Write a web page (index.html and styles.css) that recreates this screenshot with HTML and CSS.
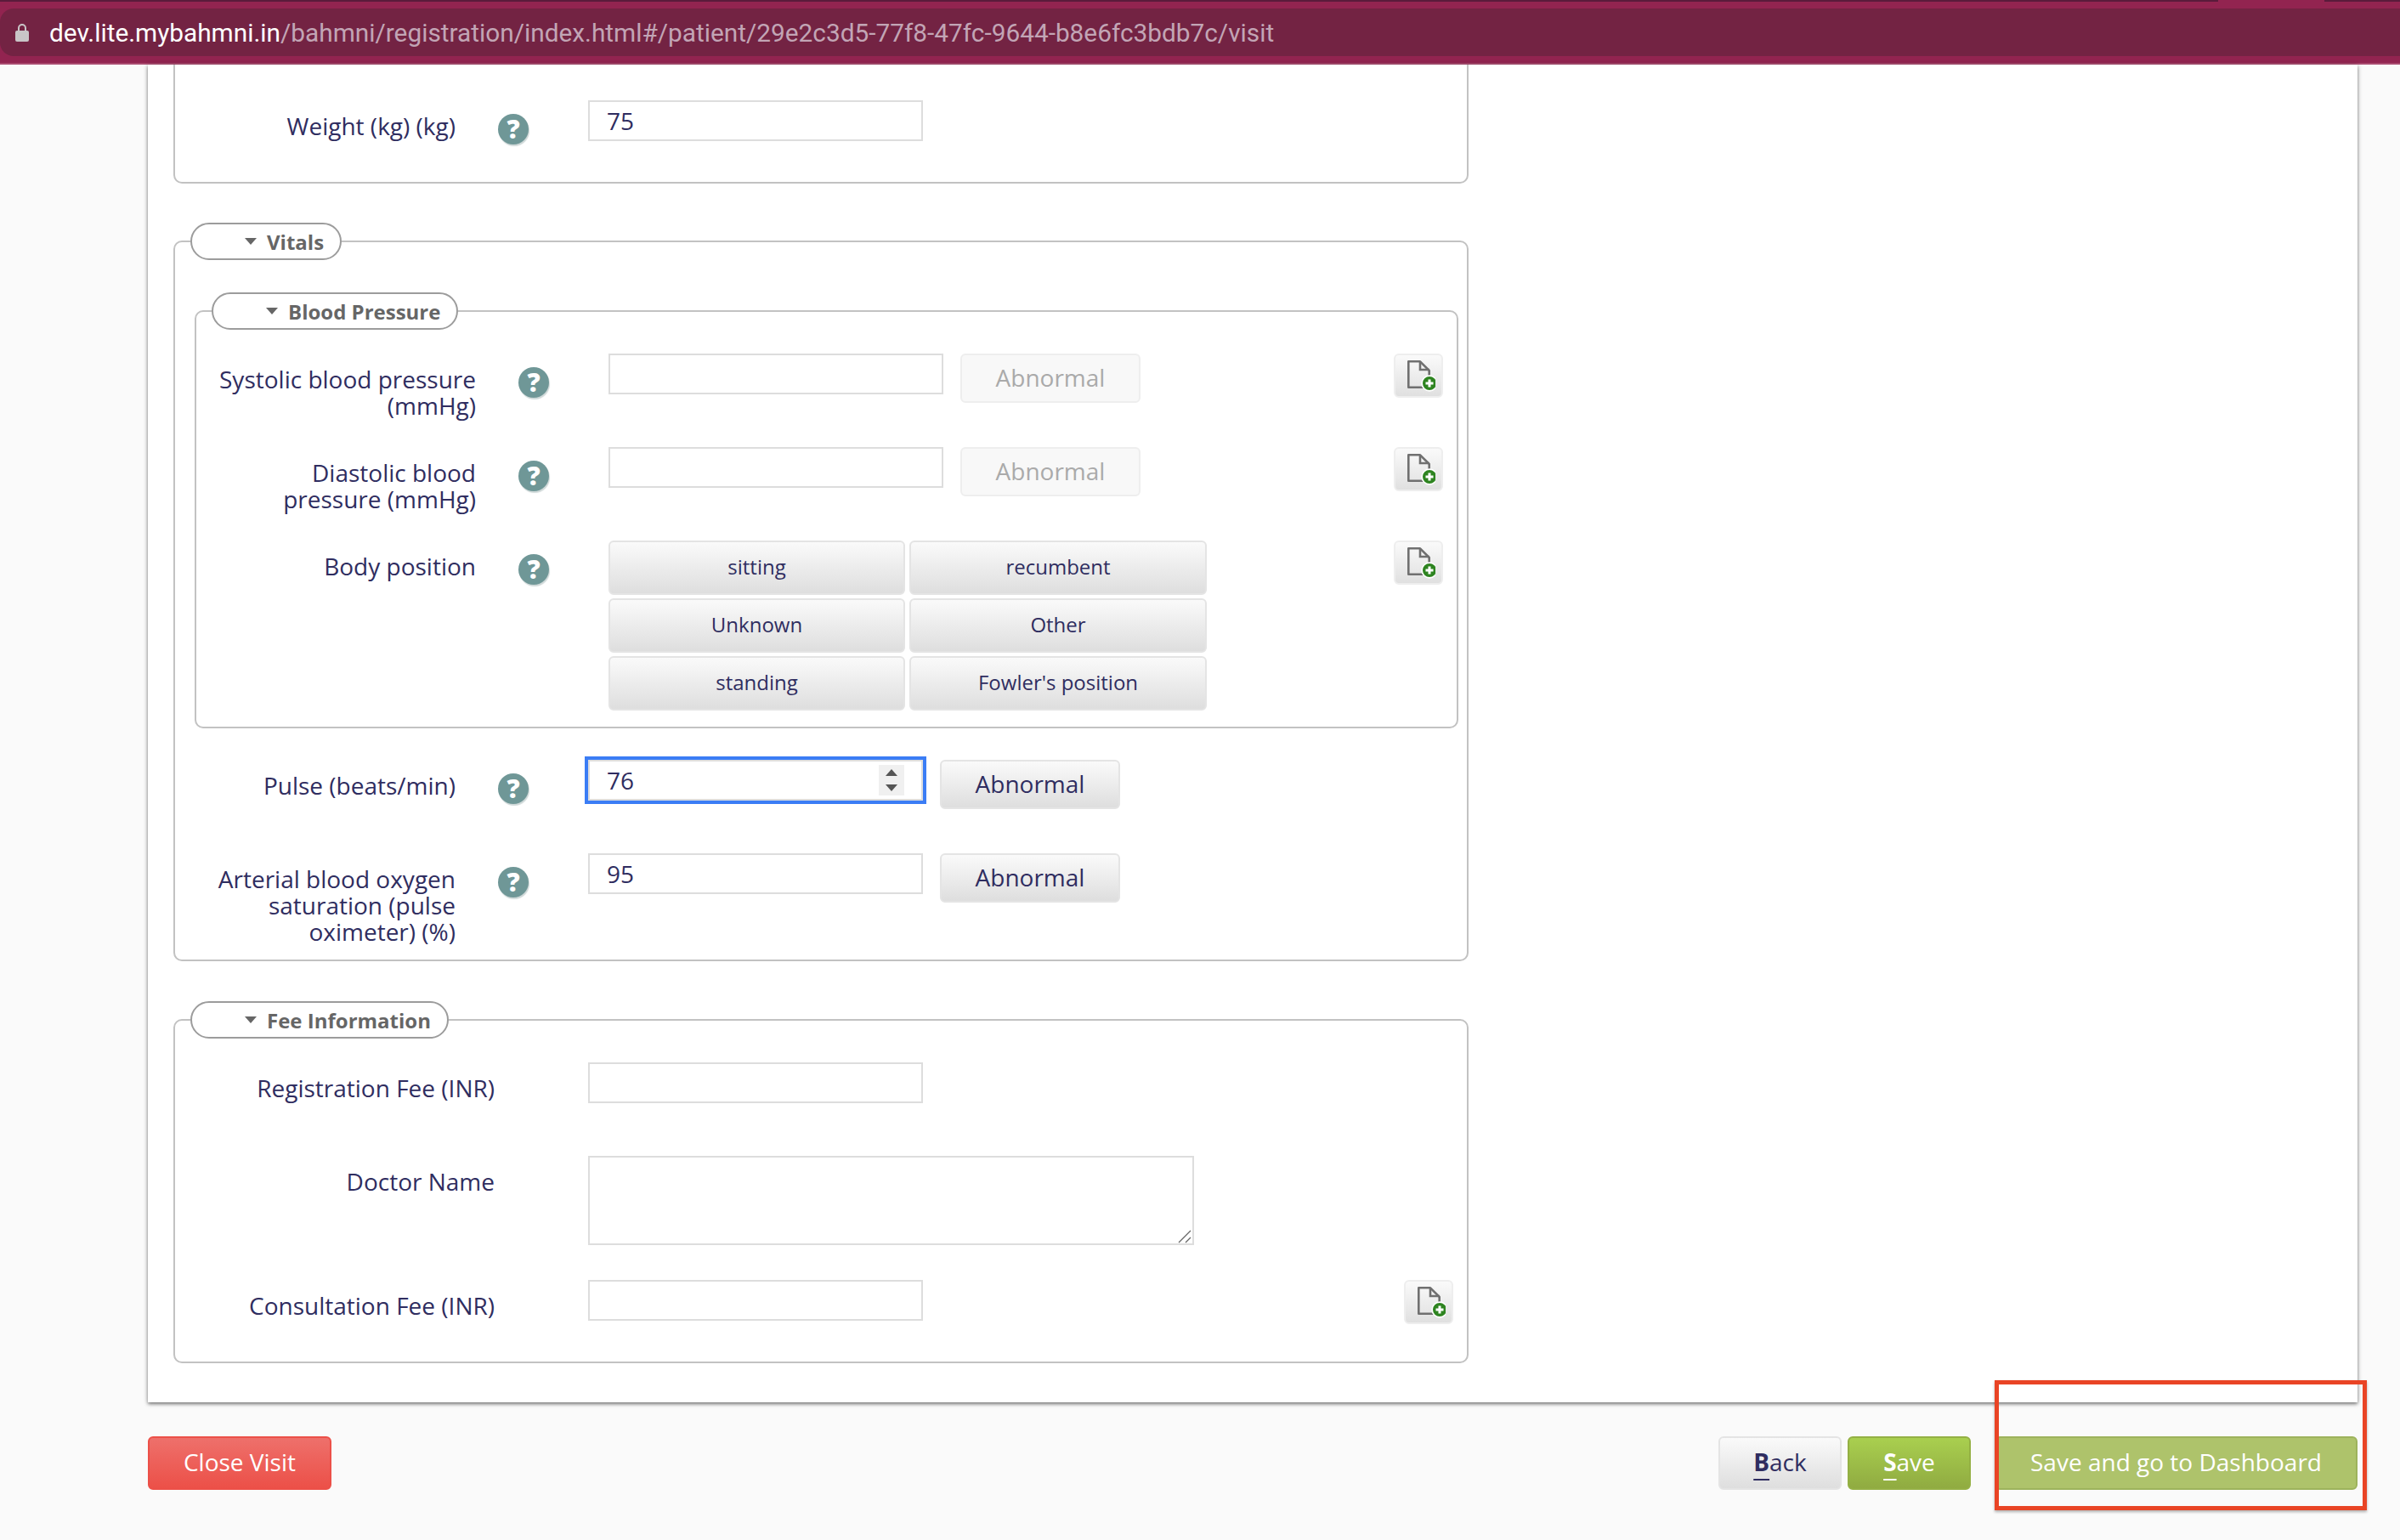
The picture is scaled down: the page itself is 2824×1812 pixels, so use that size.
FILE: index.html
```html
<!DOCTYPE html>
<html lang="en">
<head>
    <meta charset="UTF-8">
    <meta name="viewport" content="width=device-width, initial-scale=1.0">
    <title>Bahmni registration - visit</title>
    <link rel="stylesheet" href="styles.css">
</head>
<body>
    <!-- browser address bar -->
    <header class="browser-bar">
        <div class="tab-strip">
            <div class="tab-strip-left"></div>
            <div class="tab-strip-gap"></div>
            <div class="tab-strip-right"></div>
        </div>
        <div class="url-pill">
            <svg class="lock" width="16" height="22" viewBox="0 0 16 22">
                <path d="M4 10V6a4 4 0 0 1 8 0v4" fill="none" stroke="#c9c5c7" stroke-width="2"/>
                <rect x="0" y="9" width="16" height="13" rx="2" fill="#c9c5c7"/>
            </svg>
            <span class="url"><span class="url-host">dev.lite.mybahmni.in</span>/bahmni/registration/index.html#/patient/29e2c3d5-77f8-47fc-9644-b8e6fc3bdb7c/visit</span>
        </div>
    </header>

    <main class="panel">
        <!-- Weight section, scrolled off at the top -->
        <div class="group group-cut">
            <div class="row row-auto">
                <label class="row-label">Weight (kg) (kg)</label>
                <span class="help">?</span>
                <input class="field" type="text" value="75">
            </div>
        </div>

        <fieldset class="group">
            <legend class="pill"><span class="caret"></span>Vitals</legend>

            <fieldset class="group group-inner">
                <legend class="pill"><span class="caret"></span>Blood Pressure</legend>

                <div class="row">
                    <label class="row-label">Systolic blood pressure (mmHg)</label>
                    <span class="help">?</span>
                    <input class="field" type="text">
                    <button class="btn btn-abnormal" disabled>Abnormal</button>
                    <button class="btn btn-note">
                        <svg width="38" height="40" viewBox="0 0 38 40"><use href="#note-icon"/></svg>
                    </button>
                </div>

                <div class="row">
                    <label class="row-label">Diastolic blood pressure (mmHg)</label>
                    <span class="help">?</span>
                    <input class="field" type="text">
                    <button class="btn btn-abnormal" disabled>Abnormal</button>
                    <button class="btn btn-note">
                        <svg width="38" height="40" viewBox="0 0 38 40"><use href="#note-icon"/></svg>
                    </button>
                </div>

                <div class="row row-auto">
                    <label class="row-label">Body position</label>
                    <span class="help">?</span>
                    <div class="choices">
                        <button class="btn btn-choice">sitting</button>
                        <button class="btn btn-choice">recumbent</button>
                        <button class="btn btn-choice">Unknown</button>
                        <button class="btn btn-choice">Other</button>
                        <button class="btn btn-choice">standing</button>
                        <button class="btn btn-choice">Fowler's position</button>
                    </div>
                    <button class="btn btn-note">
                        <svg width="38" height="40" viewBox="0 0 38 40"><use href="#note-icon"/></svg>
                    </button>
                </div>
            </fieldset>

            <div class="row">
                <label class="row-label">Pulse (beats/min)</label>
                <span class="help">?</span>
                <span class="field-wrap">
                    <input class="field field-focus" type="text" value="76">
                    <span class="spinner"><i class="spin-up"></i><i class="spin-down"></i></span>
                </span>
                <button class="btn btn-abnormal btn-on">Abnormal</button>
            </div>

            <div class="row">
                <label class="row-label">Arterial blood oxygen saturation (pulse oximeter) (%)</label>
                <span class="help">?</span>
                <input class="field" type="text" value="95">
                <button class="btn btn-abnormal btn-on">Abnormal</button>
            </div>
        </fieldset>

        <fieldset class="group group-fee">
            <legend class="pill"><span class="caret"></span>Fee Information</legend>

            <div class="row">
                <label class="row-label row-label-wide">Registration Fee (INR)</label>
                <input class="field" type="text">
            </div>
            <div class="row row-text">
                <label class="row-label row-label-wide">Doctor Name</label>
                <span class="field-wrap">
                    <textarea class="field field-area"></textarea>
                    <svg class="grip" width="16" height="16" viewBox="0 0 16 16">
                        <path d="M1 15 15 1M9 15l6-6" stroke="#666" stroke-width="1.300" fill="none"/>
                    </svg>
                </span>
            </div>
            <div class="row row-auto">
                <label class="row-label row-label-wide">Consultation Fee (INR)</label>
                <input class="field" type="text">
                <button class="btn btn-note">
                    <svg width="38" height="40" viewBox="0 0 38 40"><use href="#note-icon"/></svg>
                </button>
            </div>
        </fieldset>
    </main>

    <footer class="actions">
        <button class="btn btn-close">Close Visit</button>
        <div class="actions-right">
            <button class="btn btn-back"><span class="key">B</span>ack</button>
            <button class="btn btn-save"><span class="key">S</span>ave</button>
            <button class="btn btn-dashboard">Save and go to Dashboard</button>
        </div>
    </footer>

    <!-- red annotation drawn over the screenshot -->
    <div class="annotation"></div>

    <svg class="icon-defs" width="0" height="0">
        <symbol id="note-icon" viewBox="0 0 38 40">
            <path d="M6.300 4.300H20L30.700 15v19.700H6.300z" fill="none" stroke="#707070" stroke-width="2.600" stroke-linejoin="round"/>
            <path d="M20 4.300V14h10.700" fill="none" stroke="#707070" stroke-width="2.600"/>
            <circle cx="31" cy="30" r="9.700" fill="#fff"/>
            <circle cx="31" cy="30" r="8" fill="#2e8420"/>
            <path d="M31 25.500v9M26.500 30h9" stroke="#fff" stroke-width="3"/>
        </symbol>
    </svg>
</body>
</html>
```

FILE: styles.css
```css
* {
    box-sizing: border-box;
}
html, body {
    height: 1812px;
    overflow: hidden;
}
body {
    margin: 0;
    background-color: #fafafa;
    font-family: "Open Sans", sans-serif;
    font-size: 28px;
    color: #2f2d60;
}

/* browser bar */
.browser-bar {
    height: 76px;
    background-color: #922450;
    border-bottom: 2px solid #a94a6f;
}
.tab-strip {
    display: flex;
    height: 2px;
    margin-bottom: 8px;
}
.tab-strip-left {
    width: 2610px;
    background-color: #5a1b3b;
}
.tab-strip-gap {
    width: 125px;
}
.tab-strip-right {
    flex: 1;
    background-color: #5a1b3b;
}
.url-pill {
    display: flex;
    align-items: center;
    height: 56px;
    padding-left: 18px;
    background-color: #732343;
    border-radius: 16px 0 0 16px;
}
.lock {
    flex: none;
    margin-right: 24px;
}
.url {
    font-family: Roboto, sans-serif;
    font-size: 29.800px;
    color: #c2a5b5;
    white-space: nowrap;
}
.url-host {
    color: #fff;
}

/* page panel */
.panel {
    width: 2600px;
    height: 1574px;
    margin-left: 174px;
    padding-left: 30px;
    background-color: #fff;
    box-shadow: 0 2px 4px rgba(0, 0, 0, 0.5), 0 0 6px rgba(0, 0, 0, 0.12);
}
.group {
    width: 1524px;
    min-width: 0;
    margin: 0 0 47px;
    padding: 0 11px 15px 23px;
    border: 2px solid #c2c2c2;
    border-radius: 10px;
}
.group-cut {
    margin-bottom: 46px;
    padding-top: 42px;
    padding-bottom: 44px;
    border-top: none;
    border-radius: 0 0 10px 10px;
}
.group-inner {
    width: 1487px;
    margin-top: 38px;
    margin-bottom: 37px;
    padding-left: 22px;
    padding-bottom: 19px;
}
.group-fee {
    margin-bottom: 0;
    padding-bottom: 44px;
}
.pill {
    display: flex;
    align-items: center;
    height: 44px;
    margin: 0 0 0 -5px;
    padding: 0 19px 0 62px;
    border: 2px solid #9c9c9c;
    border-radius: 23px;
    font-size: 24px;
    font-weight: 700;
    color: #666;
}
.group-inner > .pill {
    margin: 0 0 28px -4px;
}
.group-fee > .pill {
    margin-bottom: 28px;
}
.caret {
    width: 0;
    height: 0;
    margin-right: 12px;
    border-top: 8px solid #666;
    border-left: 7px solid transparent;
    border-right: 7px solid transparent;
}

/* form rows */
.row {
    display: flex;
    align-items: flex-start;
    height: 110px;
}
.row-auto {
    height: auto;
}
.row-text {
    height: 146px;
}
.row-label {
    flex: none;
    width: 307px;
    padding-top: 15px;
    line-height: 31px;
    text-align: right;
}
.row-label-wide {
    width: 353px;
    margin-right: 110px;
}
.help {
    flex: none;
    width: 36px;
    height: 36px;
    margin: 16px 70px 0 50px;
    background-color: #6f9797;
    border-radius: 50%;
    box-shadow: 1px 2px 1px #cfd8d8;
    font-size: 30px;
    font-weight: 800;
    line-height: 36px;
    text-align: center;
    color: #fff;
}
.field {
    display: block;
    flex: none;
    width: 394px;
    height: 48px;
    padding: 0 20px;
    background-color: #fff;
    border: 2px solid #ddd;
    border-radius: 0;
    font-family: inherit;
    font-size: 28px;
    color: #2f2d60;
}
.field-wrap {
    position: relative;
    flex: none;
}
.field-focus {
    outline: 4px solid #3b7df5;
}
.spinner {
    position: absolute;
    top: 6px;
    left: 342px;
    display: flex;
    flex-direction: column;
    align-items: center;
    justify-content: space-around;
    width: 30px;
    height: 36px;
    background-color: #f0f0f0;
}
.spin-up, .spin-down {
    width: 0;
    height: 0;
    border-left: 7px solid transparent;
    border-right: 7px solid transparent;
}
.spin-up {
    border-bottom: 8px solid #555;
}
.spin-down {
    border-top: 8px solid #555;
}
.field-area {
    width: 713px;
    height: 105px;
    resize: none;
}
.grip {
    position: absolute;
    right: 3px;
    bottom: 2px;
}

/* buttons */
.btn {
    flex: none;
    padding: 0 0 3px;
    background: linear-gradient(#fafafa, #dedede);
    border: 2px solid #e4e4e4;
    border-radius: 6px;
    font-family: inherit;
    font-size: 28px;
    color: #2f2d60;
}
.btn-abnormal {
    width: 212px;
    height: 58px;
    margin-left: 20px;
    background: #f8f8f8;
    border-color: #eee;
    color: #aaa;
}
.btn-on {
    background: linear-gradient(#fafafa, #dedede);
    border-color: #e4e4e4;
    color: #2f2d60;
}
.btn-note {
    display: flex;
    align-items: flex-start;
    justify-content: flex-start;
    width: 58px;
    height: 52px;
    margin-left: auto;
    margin-right: 5px;
    padding: 3px 0 0 9px;
    border-color: #eee;
    background: linear-gradient(#fafafa, #e0e0e0);
}
.btn-note svg {
    flex: none;
}
.choices {
    display: grid;
    grid-template-columns: 349px 350px;
    grid-auto-rows: 64px;
    gap: 4px 5px;
}
.btn-choice {
    font-size: 24px;
}

/* footer actions */
.actions {
    display: flex;
    justify-content: space-between;
    width: 2600px;
    margin: 40px 0 0 174px;
}
.actions-right {
    display: flex;
}
.actions .btn {
    height: 63px;
}
.btn-close {
    width: 216px;
    background: linear-gradient(#ee706b, #ec5048);
    border-color: #ec5048;
    color: #fff;
}
.btn-back {
    width: 145px;
    margin-right: 7px;
}
.btn-save {
    width: 145px;
    margin-right: 28px;
    background: linear-gradient(#a9cf4f, #90ab41);
    border-color: #94b044;
    color: #fff;
}
.btn-dashboard {
    width: 427px;
    background: #aec36b;
    border-color: #9db35c;
    color: #fff;
}
.key {
    font-weight: 700;
    text-decoration: underline;
    text-decoration-thickness: 2px;
    text-underline-offset: 9px;
}

/* red box */
.annotation {
    position: absolute;
    top: 1624px;
    left: 2347px;
    width: 438px;
    height: 153px;
    border: 5px solid #e94425;
    box-shadow: 0 2px 3px rgba(0, 0, 0, 0.3);
}
.icon-defs {
    position: absolute;
}
```
